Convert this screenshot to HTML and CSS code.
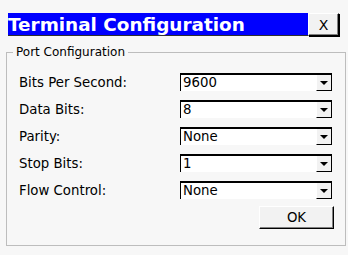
FILE: index.html
```html
<!DOCTYPE html>
<html lang="en">
<head>
  <meta charset="UTF-8">
  <title>Terminal Configuration</title>
  <link rel="stylesheet" href="styles.css">
</head>
<body>

  <div class="titlebar">
    <div class="title">Terminal Configuration</div>
    <button class="close-btn">X</button>
  </div>

  <fieldset class="group">
    <legend>Port Configuration</legend>

    <div class="row">
      <span class="label">Bits Per Second:</span>
      <div class="combo"><span class="value">9600</span><span class="combo-btn"></span></div>
    </div>
    <div class="row">
      <span class="label">Data Bits:</span>
      <div class="combo"><span class="value">8</span><span class="combo-btn"></span></div>
    </div>
    <div class="row">
      <span class="label">Parity:</span>
      <div class="combo"><span class="value">None</span><span class="combo-btn"></span></div>
    </div>
    <div class="row">
      <span class="label">Stop Bits:</span>
      <div class="combo"><span class="value">1</span><span class="combo-btn"></span></div>
    </div>
    <div class="row">
      <span class="label">Flow Control:</span>
      <div class="combo"><span class="value">None</span><span class="combo-btn"></span></div>
    </div>

    <div class="actions">
      <button class="ok-btn">OK</button>
    </div>
  </fieldset>

</body>
</html>
```

FILE: styles.css
```css
body {
  margin: 0;
  background: #f7f7f7;
  font-family: "DejaVu Sans", sans-serif;
  font-size: 13.3px;
  color: #000;
}

.titlebar {
  display: flex;
  height: 23px;
  margin: 13px 9px 0 8px;
}

.title {
  flex: 1;
  background: #0000ff;
  color: white;
  font-weight: bold;
  font-size: 18.4px;
  white-space: nowrap;
  overflow: hidden;
  border-bottom: 1px solid #303030;
  height: 22px;
  line-height: 23px;
}

.close-btn {
  width: 31px;
  height: 23px;
  padding: 0;
  background: #f2f2f2;
  font-family: "DejaVu Sans", sans-serif;
  font-size: 14px;
  color: #000;
  border: 1px solid;
  border-color: #fff #000 #000 #fff;
  box-shadow: inset -1px -1px 0 #808080, 1px 1px 0 #000;
}

.group {
  margin: 9px 2px 0 6px;
  padding: 14px 12px 16px 12px;
  border: 1px solid #bdbdbd;
  display: flex;
  flex-direction: column;
  gap: 9px;
}

.group legend {
  margin-left: -6px;
  padding: 0 3px;
  font-size: 12px;
  line-height: 14px;
}

.row {
  display: flex;
  align-items: center;
  height: 18px;
}

.label {
  width: 161px;
}

.combo {
  display: flex;
  width: 152px;
  height: 18px;
  background: #fff;
  border-top: 2px solid #000;
  border-left: 1px solid #000;
  box-sizing: border-box;
}

.value {
  flex: 1;
  padding-left: 2px;
  line-height: 16px;
}

.combo-btn {
  width: 14px;
  background: #f2f2f2;
  border-right: 1px solid #000;
  border-bottom: 1px solid #000;
  border-left: 1px solid #fff;
  display: flex;
  align-items: center;
  justify-content: center;
}

.combo-btn::after {
  content: "";
  border-left: 4px solid transparent;
  border-right: 4px solid transparent;
  border-top: 4px solid #000;
}

.actions {
  display: flex;
  justify-content: flex-end;
  margin-top: -2px;
  margin-right: -1px;
}

.ok-btn {
  width: 75px;
  height: 23px;
  padding: 0;
  background: #f2f2f2;
  font-family: "DejaVu Sans", sans-serif;
  font-size: 13.3px;
  color: #000;
  border: 1px solid;
  border-color: #fff #000 #000 #fff;
  box-shadow: inset -1px -1px 0 #808080;
}
```
